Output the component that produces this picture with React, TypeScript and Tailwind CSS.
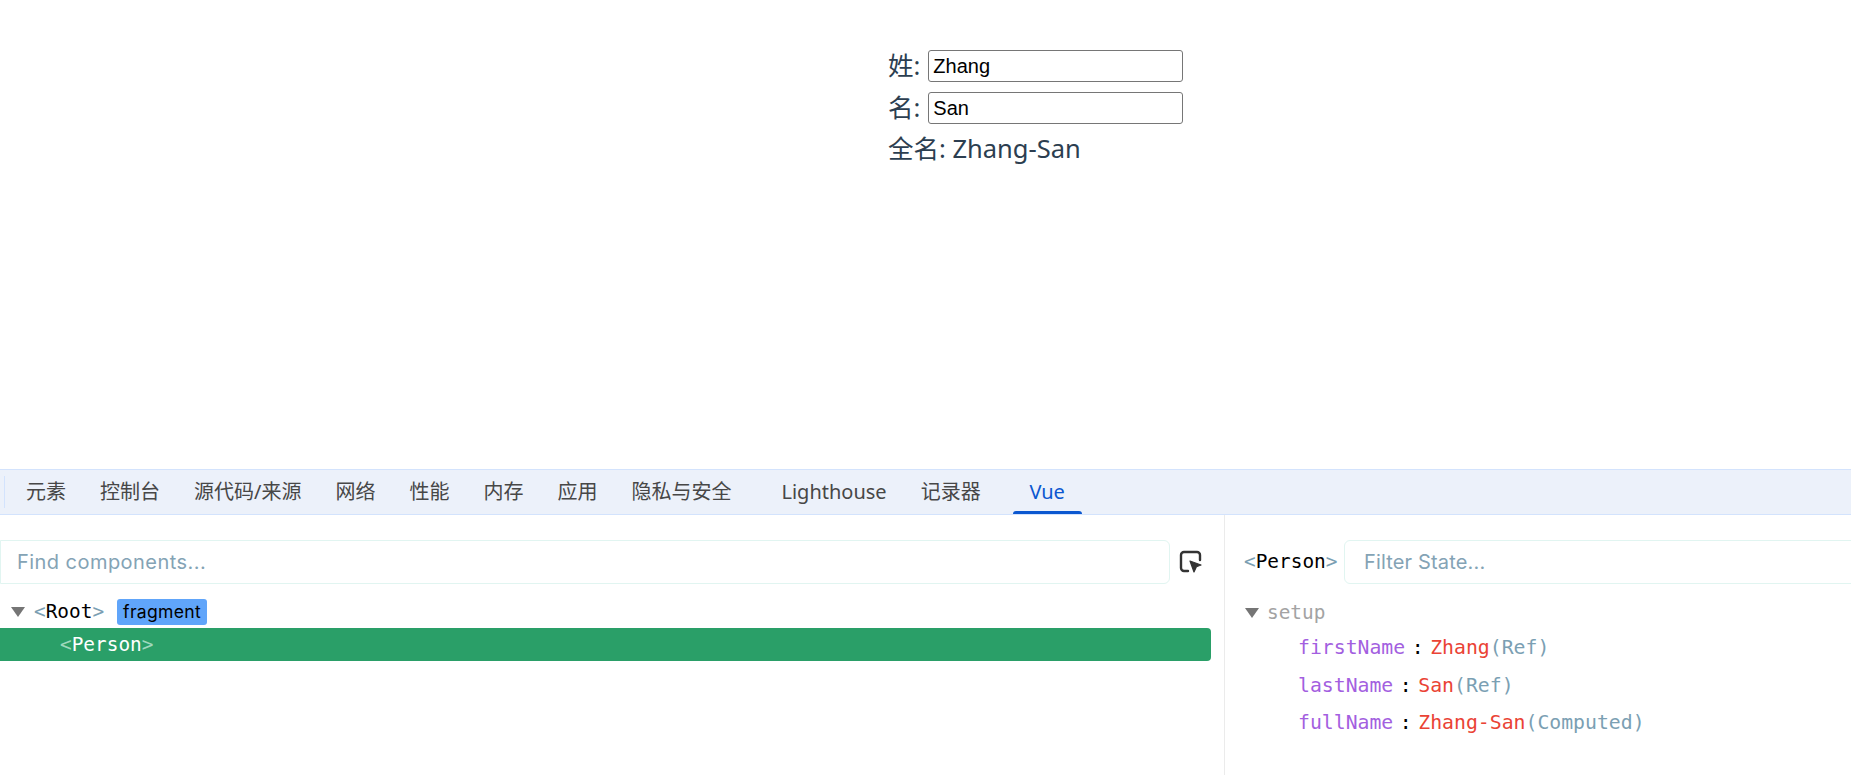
const cjk = "font-['Noto_Sans','Noto_Sans_CJK_SC',sans-serif]";
const mono = "font-['DejaVu_Sans_Mono','Liberation_Mono',monospace]";
const ui = "font-['Inter','Noto_Sans',sans-serif]";

function Tab({ label, className = "" }: { label: string; className?: string }) {
  return <div className={`px-[17px] h-full flex items-center ${className}`}>{label}</div>;
}

function Caret({ className = "" }: { className?: string }) {
  return (
    <svg width="14" height="10" viewBox="0 0 14 10" className={className}>
      <polygon points="0,0 14,0 7,10" fill="#757575" />
    </svg>
  );
}

function Prop({ name, value, type }: { name: string; value: string; type: string }) {
  return (
    <div className={`flex items-center pl-[54px] h-[37.6px] ${mono} text-[19.8px]`}>
      <span className="text-[#a35fe0]">{name}</span>
      <span className="text-black mx-[6px] w-[13px] text-center">:</span>
      <span className="text-[#ea4335]">{value}</span>
      <span className="text-[#7b9fb3]">({type})</span>
    </div>
  );
}

export default function App() {
  return (
    <div className="w-[1851px] h-[775px] overflow-hidden bg-white flex flex-col">
      <div className={`h-[469px] shrink-0 pl-[888px] pt-[45px] text-[25.5px] text-[#2c3e50] ${cjk}`}>
        <div className="h-[42px] flex items-center">
          <span className="pb-[2px]">姓:</span>
          <input
            readOnly
            value="Zhang"
            className="ml-[8px] w-[255px] h-[32px] border border-[#767676] rounded-[3px] px-[4px] text-[20px] text-black font-['Liberation_Sans',sans-serif] bg-white"
          />
        </div>
        <div className="h-[42px] flex items-center">
          <span className="pb-[2px]">名:</span>
          <input
            readOnly
            value="San"
            className="ml-[8px] w-[255px] h-[32px] border border-[#767676] rounded-[3px] px-[4px] text-[20px] text-black font-['Liberation_Sans',sans-serif] bg-white"
          />
        </div>
        <div className="h-[38px] flex items-center">全名: Zhang-San</div>
      </div>

      <div className={`h-[46px] shrink-0 bg-[#ecf1fa] border-y border-[#d3e3fd] flex items-center text-[20px] text-[#474747] ${cjk}`}>
        <div className="w-[1px] h-[32px] bg-[#d3e3fd] ml-[4px] mr-[4px]" />
        <Tab label="元素" />
        <Tab label="控制台" />
        <Tab label="源代码/来源" />
        <Tab label="网络" />
        <Tab label="性能" />
        <Tab label="内存" />
        <Tab label="应用" />
        <Tab label="隐私与安全" />
        <Tab label="Lighthouse" className="ml-[16px]" />
        <Tab label="记录器" />
        <div className="ml-[15px] w-[69px] h-full flex items-center justify-center text-[#0b57d0] relative">
          Vue
          <div className="absolute bottom-0 left-0 right-0 h-[3px] bg-[#0b57d0] rounded-t-[3px]" />
        </div>
      </div>

      <div className="flex-1 flex min-h-0">
        <div className="w-[1225px] shrink-0 border-r border-[#ebebeb] pt-[25px]">
          <div className="flex items-center h-[44px]">
            <div className={`w-[1170px] h-[44px] border border-[#e1f5f1] rounded-r-[6px] flex items-center pl-[16px] text-[20px] tracking-[0.45px] text-[#84a3b5] ${ui}`}>
              Find components...
            </div>
            <svg width="26" height="26" viewBox="0 0 26 26" className="ml-[8px]" fill="none">
              <path d="M10 22H6a3 3 0 0 1-3-3V6a3 3 0 0 1 3-3h13a3 3 0 0 1 3 3v5" stroke="#333" strokeWidth="2.4" strokeLinecap="round" />
              <path d="M12 12l11 4-4.6 1.8L16 23z" fill="#333" stroke="#333" strokeWidth="1.2" strokeLinejoin="round" />
            </svg>
          </div>
          <div className={`mt-[12px] h-[32px] flex items-center pl-[11px] text-[19.4px] ${mono}`}>
            <Caret />
            <span className="ml-[9px] text-[#7b9fb3]">&lt;</span>
            <span className="text-black">Root</span>
            <span className="text-[#7b9fb3]">&gt;</span>
            <span className={`ml-[13px] h-[26px] px-[6px] rounded-[3px] bg-[#60a5fa] text-black text-[17.6px] tracking-[0.3px] flex items-center ${ui}`}>
              fragment
            </span>
          </div>
          <div className={`w-[1211px] h-[33px] bg-[#2a9f68] rounded-r-[4px] flex items-center pl-[60px] text-[19.4px] text-white ${mono}`}>
            <span className="text-[#9fd8bd]">&lt;</span>
            <span>Person</span>
            <span className="text-[#9fd8bd]">&gt;</span>
          </div>
        </div>

        <div className="flex-1 min-w-0 overflow-hidden pt-[25px] pl-[19px]">
          <div className="flex items-center h-[44px]">
            <div className={`w-[100px] shrink-0 text-[19.4px] ${mono}`}>
              <span className="text-[#7b9fb3]">&lt;</span>
              <span className="text-black">Person</span>
              <span className="text-[#7b9fb3]">&gt;</span>
            </div>
            <div className={`w-[1000px] shrink-0 h-[44px] border border-[#e1f5f1] rounded-l-[6px] flex items-center pl-[19px] text-[20px] tracking-[0.16px] text-[#84a3b5] ${ui}`}>
              Filter State...
            </div>
          </div>
          <div className={`mt-[13px] h-[32px] flex items-center text-[19.4px] text-[#a3a3a3] ${mono}`}>
            <Caret className="ml-[1px]" />
            <span className="ml-[8px]">setup</span>
          </div>
          <div>
            <Prop name="firstName" value="Zhang" type="Ref" />
            <Prop name="lastName" value="San" type="Ref" />
            <Prop name="fullName" value="Zhang-San" type="Computed" />
          </div>
        </div>
      </div>
    </div>
  );
}
